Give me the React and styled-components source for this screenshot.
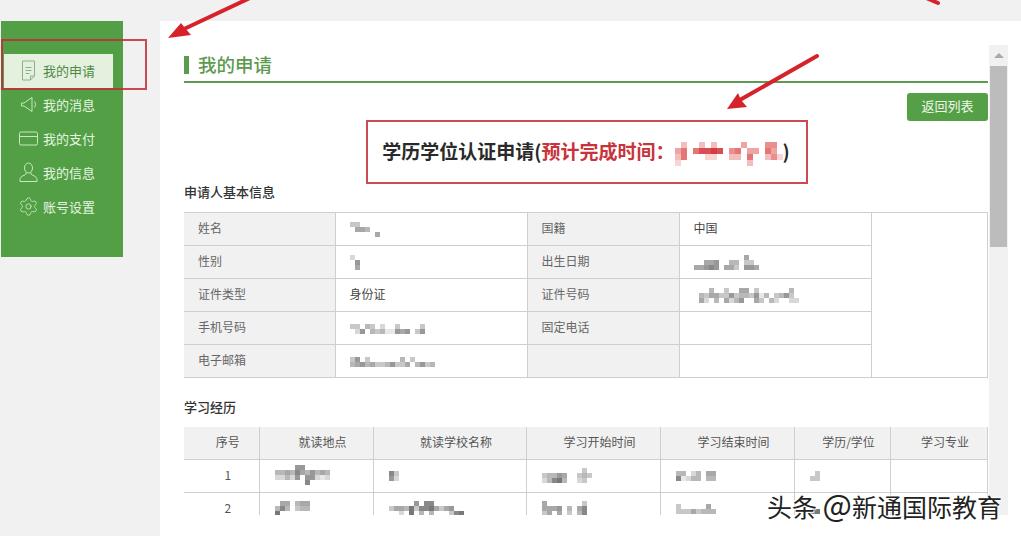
import React from 'react';
import styled, { createGlobalStyle } from 'styled-components';
import { Settings } from 'lucide-react';

const GlobalStyle = createGlobalStyle`
  html, body {
    margin: 0;
    padding: 0;
    background: #f1f1f1;
    font-family: 'Noto Sans CJK SC', 'Liberation Sans', sans-serif;
  }
`;

const Page = styled.div`
  position: relative;
  display: flex;
  align-items: flex-start;
  width: 1021px;
  height: 536px;
  padding: 21px 0 0 1px;
  box-sizing: border-box;
  overflow: hidden;
`;

const Sidebar = styled.nav`
  width: 122px;
  height: 236px;
  flex: none;
  padding-top: 33px;
  box-sizing: border-box;
  background: #529f45;
`;

const NavItem = styled.div`
  display: flex;
  align-items: center;
  gap: 4px;
  width: 109px;
  height: 34px;
  margin-left: 3px;
  padding: 0 0 2px 14px;
  box-sizing: border-box;
  font-size: 13px;
  color: ${(p) => (p.$active ? '#4f8a48' : '#e6f4e0')};
  background: ${(p) => (p.$active ? '#e4f1de' : 'transparent')};

  svg {
    flex: none;
    width: 21px;
    height: 21px;
    fill: none;
    stroke: ${(p) => (p.$active ? '#8fae8b' : '#c9e8bf')};
    stroke-width: 1;
  }
`;

const Panel = styled.main`
  flex: 1;
  height: 515px;
  margin-left: 37px;
  padding: 24px 0 0 24px;
  background: #fff;
`;

const Scroller = styled.div`
  display: flex;
  align-items: flex-start;
  height: 470px;
  overflow: hidden;
`;

const Content = styled.div`
  width: 804px;
  flex: none;
`;

const ScrollTrack = styled.div`
  width: 19px;
  height: 470px;
  flex: none;
  margin-left: 1px;
  background: #f1f1f1;
`;

const ScrollArrow = styled.div`
  display: flex;
  align-items: center;
  justify-content: center;
  height: 21px;

  &::before {
    content: '';
    border-left: 5px solid transparent;
    border-right: 5px solid transparent;
    border-bottom: 5px solid #a9a9a9;
  }
`;

const ScrollThumb = styled.div`
  width: 17px;
  height: 181px;
  margin-left: 1px;
  background: #bcbcbc;
`;

const TitleRow = styled.div`
  display: flex;
  align-items: center;
  height: 36px;
  box-sizing: content-box;
  border-bottom: 2px solid #5f9a54;
`;

const TitleBar = styled.span`
  width: 5px;
  height: 18px;
  margin: 4px 9px 0 0;
  background: #5c9a4e;
`;

const Title = styled.h1`
  margin: 2px 0 0;
  font-size: 18.5px;
  font-weight: 500;
  line-height: 34px;
  color: #5c9a4e;
`;

const Toolbar = styled.div`
  display: flex;
  justify-content: flex-end;
  margin-top: 10px;
`;

const BackButton = styled.button`
  width: 81px;
  height: 28px;
  padding: 0 0 3px;
  border: 0;
  border-radius: 3px;
  font-family: inherit;
  font-size: 13px;
  color: #f1f8ee;
  background: #55a046;
`;

const FormHeading = styled.h2`
  margin: 15px 0 0;
  font-size: 19px;
  font-weight: 700;
  line-height: 30px;
  text-align: center;
  color: #2a2a2a;
  height: 30px;
`;

const Red = styled.span`
  color: #c8343c;
`;

const SectionLabel = styled.h3`
  margin: ${(p) => p.$top}px 0 10px;
  font-size: 13px;
  font-weight: 500;
  line-height: 20px;
  color: #333;
`;

const InfoTable = styled.table`
  width: 803px;
  table-layout: fixed;
  border-collapse: collapse;
  font-size: 12px;
  color: #444;

  td {
    height: 33px;
    padding: 0 0 2px 14px;
    box-sizing: border-box;
    line-height: 16px;
    border: 1px solid #cfcfcf;
  }

  td:first-child {
    border-left: 0;
  }
`;

const LabelCell = styled.td`
  background: #f1f1f1;
  color: #666;
`;

const HistoryTable = styled.table`
  width: 803px;
  table-layout: fixed;
  border-collapse: collapse;
  font-size: 12px;
  color: #555;

  th, td {
    height: 33px;
    padding: 0 0 2px;
    box-sizing: border-box;
    font-weight: 400;
    line-height: 16px;
    border: 1px solid #cfcfcf;
  }

  th {
    height: 32px;
    padding-left: 13px;
    text-align: center;
    background: #f1f1f1;
    border-top: 0;
  }

  th:first-child, td:first-child {
    border-left: 0;
  }
`;

const IndexCell = styled.td`
  padding-left: 13px !important;
  text-align: center;
`;

const BlurCell = styled.td`
  padding-left: 15px !important;
`;

const MosaicSvg = styled.svg`
  display: inline-block;
  vertical-align: middle;
  filter: blur(0.5px);
`;

const Overlay = styled.svg`
  position: absolute;
  top: 0;
  left: 0;
  width: 1021px;
  height: 536px;
  pointer-events: none;
`;

const RedBox = styled.div`
  position: absolute;
  left: ${(p) => p.$x}px;
  top: ${(p) => p.$y}px;
  width: ${(p) => p.$w}px;
  height: ${(p) => p.$h}px;
  box-sizing: border-box;
  border: 2px solid rgba(192, 44, 54, 0.85);
  pointer-events: none;
`;

const Watermark = styled.div`
  position: absolute;
  left: 767px;
  top: 489px;
  font-size: 25px;
  line-height: 34px;
  white-space: nowrap;
  color: #222;
  text-shadow: 0 0 2px #fff, 0 0 2px #fff, 1px 1px 1px #fff, -1px -1px 1px #fff;
`;

const At = styled.span`
  font-size: 31px;
  line-height: 0;
`;

const GREYS = ['', '#e8e8e8', '#d8d8d8', '#c8c8c8', '#b8b8b8', '#a8a8a8', '#989898', '#888888', '#787878', '#686868'];
const REDS = ['', '#fce8e8', '#f9d4d4', '#f5bcbc', '#efa4a4', '#ea8e8e', '#e47676', '#de6060', '#d94e52', '#d43c44'];

// the blurred-out personal data, one digit per square
const Mosaic = ({ rows, size = 5, palette = GREYS }) => (
  <MosaicSvg width={rows[0].length * size} height={rows.length * size}>
    {rows.map((row, y) =>
      row.split('').map((c, x) =>
        c === '0' ? null : (
          <rect key={`${x}-${y}`} x={x * size} y={y * size} width={size} height={size} fill={palette[+c]} />
        )
      )
    )}
  </MosaicSvg>
);

const FileIcon = () => (
  <svg viewBox="0 0 21 21">
    <path d="M4.5 1h12v15l-4 4h-8z" />
    <path d="M16.5 16h-4v4M7.5 7.5h6M7.5 10.5h6M7.5 13.5h4" />
  </svg>
);

const SpeakerIcon = () => (
  <svg viewBox="0 0 21 21">
    <path d="M3.5 9h2.5l8-5.5v14l-8-5.5h-2.5z" />
    <path d="M16.5 7.5c1.3 2 1.3 4 0 6" />
  </svg>
);

const CardIcon = () => (
  <svg viewBox="0 0 21 21">
    <rect x="1.5" y="4" width="18" height="13" rx="1.5" />
    <path d="M1.5 8.5h18" />
  </svg>
);

const UserIcon = () => (
  <svg viewBox="0 0 21 21">
    <ellipse cx="10.5" cy="6" rx="4" ry="5" />
    <path d="M8 10.5v1.5c0 1-6 2-6 5.500v2h17v-2c0-3.500-6-4.500-6-5.500v-1.500" />
  </svg>
);

const navItems = [
  { label: '我的申请', Icon: FileIcon, active: true },
  { label: '我的消息', Icon: SpeakerIcon },
  { label: '我的支付', Icon: CardIcon },
  { label: '我的信息', Icon: UserIcon },
  { label: '账号设置', Icon: Settings },
];

const App = () => (
  <Page>
    <GlobalStyle />
    <Sidebar>
      {navItems.map(({ label, Icon, active }) => (
        <NavItem key={label} $active={active}>
          <Icon />
          {label}
        </NavItem>
      ))}
    </Sidebar>

    <Panel>
      <Scroller>
        <Content>
          <TitleRow>
            <TitleBar />
            <Title>我的申请</Title>
          </TitleRow>
          <Toolbar>
            <BackButton>返回列表</BackButton>
          </Toolbar>
          <FormHeading>
            学历学位认证申请(<Red>预计完成时间：</Red>
            <Mosaic
              size={6}
              palette={REDS}
              rows={['030030300004000550', '460688980560440640', '360002200330600352', '200000000000300000']}
            />
            )
          </FormHeading>

          <SectionLabel $top={16}>申请人基本信息</SectionLabel>
          <InfoTable>
            <colgroup>
              <col width="151" />
              <col width="192" />
              <col width="152" />
              <col width="192" />
              <col width="116" />
            </colgroup>
            <tbody>
              <tr>
                <LabelCell>姓名</LabelCell>
                <td>
                  <Mosaic rows={['330000', '055400', '000005']} />
                </td>
                <LabelCell>国籍</LabelCell>
                <td>中国</td>
                <td rowSpan={5} />
              </tr>
              <tr>
                <LabelCell>性别</LabelCell>
                <td>
                  <Mosaic rows={['20', '06', '05']} />
                </td>
                <LabelCell>出生日期</LabelCell>
                <td>
                  <Mosaic rows={['0000000000500', '0055600440330', '5567605530665']} />
                </td>
              </tr>
              <tr>
                <LabelCell>证件类型</LabelCell>
                <td>身份证</td>
                <LabelCell>证件号码</LabelCell>
                <td>
                  <Mosaic rows={['000400300550300000040', '043553363443614034630', '052040524600530420022']} />
                </td>
              </tr>
              <tr>
                <LabelCell>手机号码</LabelCell>
                <td>
                  <Mosaic rows={['330430200300003', '026043411656036']} />
                </td>
                <LabelCell>固定电话</LabelCell>
                <td />
              </tr>
              <tr>
                <LabelCell>电子邮箱</LabelCell>
                <td>
                  <Mosaic rows={['360300000040300000', '456453346335046340']} />
                </td>
                <LabelCell />
                <td />
              </tr>
            </tbody>
          </InfoTable>

          <SectionLabel $top={19}>学习经历</SectionLabel>
          <HistoryTable>
            <colgroup>
              <col width="75" />
              <col width="114" />
              <col width="153" />
              <col width="134" />
              <col width="134" />
              <col width="96" />
              <col width="97" />
            </colgroup>
            <thead>
              <tr>
                <th>序号</th>
                <th>就读地点</th>
                <th>就读学校名称</th>
                <th>学习开始时间</th>
                <th>学习结束时间</th>
                <th>学历/学位</th>
                <th>学习专业</th>
              </tr>
            </thead>
            <tbody>
              <tr>
                <IndexCell>1</IndexCell>
                <BlurCell>
                  <Mosaic rows={['000066000000', '445475464540', '224260662120', '000000700000']} />
                </BlurCell>
                <BlurCell>
                  <Mosaic rows={['73', '62']} />
                </BlurCell>
                <BlurCell>
                  <Mosaic rows={['0000000030', '3446500343', '2478400230']} />
                </BlurCell>
                <BlurCell>
                  <Mosaic rows={['440240550', '712440440']} />
                </BlurCell>
                <BlurCell>
                  <Mosaic rows={['03', '33']} />
                </BlurCell>
                <td />
              </tr>
              <tr>
                <IndexCell>2</IndexCell>
                <BlurCell>
                  <Mosaic rows={['055045500', '474034400', '800000000']} />
                </BlurCell>
                <BlurCell>
                  <Mosaic rows={['000006077000000000', '355483778535600000', '002080404000378000']} />
                </BlurCell>
                <BlurCell>
                  <Mosaic rows={['5000000030', '5556040570', '3505030470']} />
                </BlurCell>
                <BlurCell>
                  <Mosaic rows={['300000500', '333534440']} />
                </BlurCell>
                <BlurCell>
                  <Mosaic rows={['0000', '7800']} />
                </BlurCell>
                <td />
              </tr>
            </tbody>
          </HistoryTable>
        </Content>
        <ScrollTrack>
          <ScrollArrow />
          <ScrollThumb />
        </ScrollTrack>
      </Scroller>
    </Panel>

    <RedBox $x={1} $y={39} $w={146} $h={51} />
    <RedBox $x={366} $y={120} $w={442} $h={64} />

    <Overlay viewBox="0 0 1021 536">
      <g stroke="#d6232b" strokeWidth="4" strokeLinecap="round" fill="#d6232b">
        <path d="M184 29L252 -3" fill="none" />
        <path d="M738 101L817 56" fill="none" />
        <path d="M924 -3L938 3" fill="none" />
      </g>
      <g fill="#d6232b">
        <path d="M168 38L181 23L185 28L191 35z" />
        <path d="M727 109L738 93L741 100L747 107z" />
      </g>
    </Overlay>

    <Watermark>头条 <At>@</At>新通国际教育</Watermark>
  </Page>
);

export default App;
